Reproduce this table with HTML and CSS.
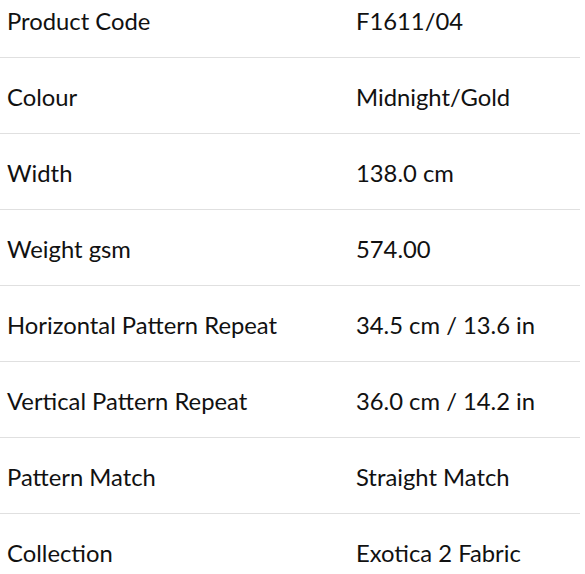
FILE: index.html
```html
<!DOCTYPE html>
<html>
<head>
<meta charset="utf-8">
<link rel="stylesheet" href="styles.css">
</head>
<body>
<div class="specs">
  <div class="row"><div class="label">Product Code</div><div class="value">F1611/04</div></div>
  <div class="row"><div class="label">Colour</div><div class="value">Midnight/Gold</div></div>
  <div class="row"><div class="label">Width</div><div class="value">138.0 cm</div></div>
  <div class="row"><div class="label">Weight gsm</div><div class="value">574.00</div></div>
  <div class="row"><div class="label">Horizontal Pattern Repeat</div><div class="value">34.5 cm / 13.6 in</div></div>
  <div class="row"><div class="label">Vertical Pattern Repeat</div><div class="value">36.0 cm / 14.2 in</div></div>
  <div class="row"><div class="label">Pattern Match</div><div class="value">Straight Match</div></div>
  <div class="row"><div class="label">Collection</div><div class="value">Exotica 2 Fabric</div></div>
</div>
</body>
</html>
```

FILE: styles.css
```css
html, body {
  margin: 0;
  padding: 0;
  background: #fff;
}
.specs {
  width: 580px;
  font-family: Lato, "Liberation Sans", sans-serif;
  font-size: 23.8px;
  line-height: 28px;
  color: #111;
}
.row {
  display: grid;
  grid-template-columns: 348px 1fr;
  padding: 25px 0 22px 7px;
  border-top: 1px solid #e0e0e0;
}
.value {
  padding-left: 1px;
}
.row:first-child {
  border-top: none;
  padding-top: 7px;
}
```
